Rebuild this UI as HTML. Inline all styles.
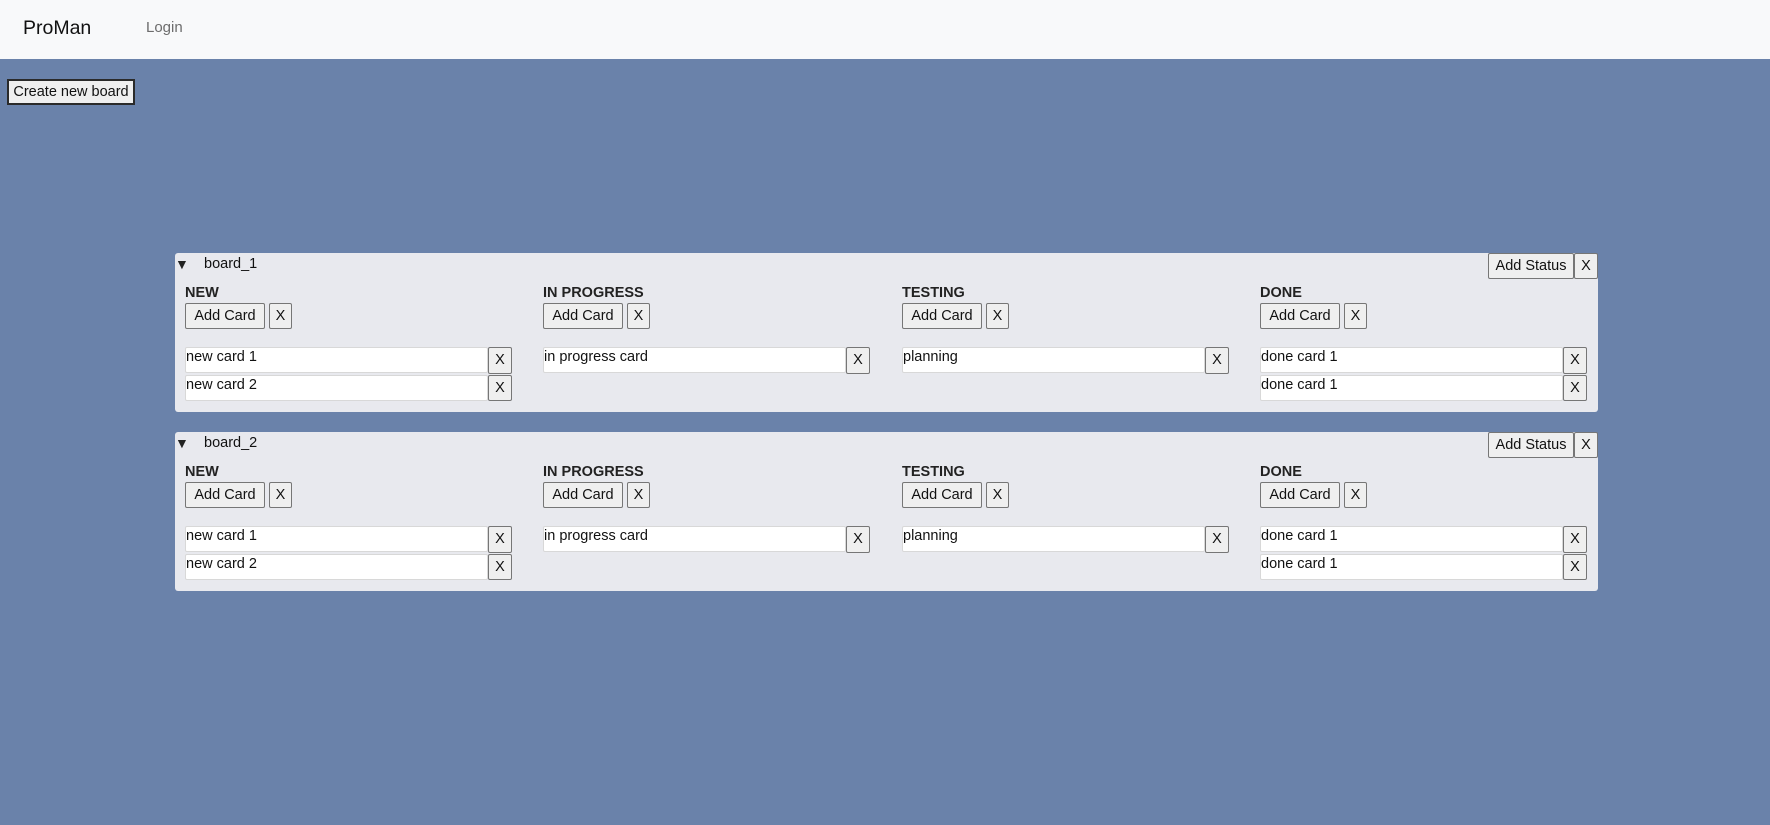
<!DOCTYPE html>
<html><head><meta charset="utf-8"><style>
*{box-sizing:border-box;margin:0;padding:0}
body{width:1770px;height:825px;background:#6a82aa;font-family:"Liberation Sans",Arial,sans-serif;position:relative;overflow:hidden;color:#222}
.nav{position:absolute;left:0;top:0;width:1770px;height:59px;background:#f8f9fa}
.brand{position:absolute;left:23px;top:17px;font-size:19.5px;color:#111}
.login{position:absolute;left:146px;top:19px;font-size:15px;color:#6c6c6c}
.btn{position:absolute;background:#efefef;border:1px solid #767676;border-radius:2px;font-size:14.5px;color:#111;text-align:center;line-height:24px;font-family:"Liberation Sans",Arial,sans-serif}
.create{left:7px;top:79px;width:128px;height:26px;border:2px solid #2a2a2a;border-radius:0;line-height:22px}
.board{position:absolute;left:175px;width:1423px;height:159px;background:#e8e9ee;border-radius:3px}
.tri{position:absolute;left:0;top:3px;font-size:14px}
.title{position:absolute;left:29px;top:3px;font-size:14.5px;color:#111}
.h{position:absolute;top:32px;font-size:14.5px;font-weight:bold;color:#222}
.card{position:absolute;width:303px;height:26px;background:#fff;border:1px solid #d8d8d8;border-radius:2px;font-size:14.5px;padding-left:0;line-height:19px;color:#111}
</style></head><body>
<div class="nav"><div class="brand">ProMan</div><div class="login">Login</div></div>
<div class="btn create">Create new board</div>

<div class="board" style="top:253px">
<div class="tri">▼</div><div class="title">board_1</div>
<div class="btn" style="left:1313px;top:0;width:86px;height:26px">Add Status</div>
<div class="btn" style="left:1399px;top:0;width:24px;height:26px">X</div>
<div class="h" style="left:10px">NEW</div>
<div class="btn" style="left:10px;top:50px;width:80px;height:26px">Add Card</div><div class="btn" style="left:94px;top:50px;width:23px;height:26px">X</div>
<div class="card" style="left:10px;top:94px">new card 1</div><div class="btn" style="left:313px;top:94px;width:24px;height:27px">X</div>
<div class="card" style="left:10px;top:122px">new card 2</div><div class="btn" style="left:313px;top:122px;width:24px;height:26px">X</div>
<div class="h" style="left:368px">IN PROGRESS</div>
<div class="btn" style="left:368px;top:50px;width:80px;height:26px">Add Card</div><div class="btn" style="left:452px;top:50px;width:23px;height:26px">X</div>
<div class="card" style="left:368px;top:94px">in progress card</div><div class="btn" style="left:671px;top:94px;width:24px;height:27px">X</div>
<div class="h" style="left:727px">TESTING</div>
<div class="btn" style="left:727px;top:50px;width:80px;height:26px">Add Card</div><div class="btn" style="left:811px;top:50px;width:23px;height:26px">X</div>
<div class="card" style="left:727px;top:94px">planning</div><div class="btn" style="left:1030px;top:94px;width:24px;height:27px">X</div>
<div class="h" style="left:1085px">DONE</div>
<div class="btn" style="left:1085px;top:50px;width:80px;height:26px">Add Card</div><div class="btn" style="left:1169px;top:50px;width:23px;height:26px">X</div>
<div class="card" style="left:1085px;top:94px">done card 1</div><div class="btn" style="left:1388px;top:94px;width:24px;height:27px">X</div>
<div class="card" style="left:1085px;top:122px">done card 1</div><div class="btn" style="left:1388px;top:122px;width:24px;height:26px">X</div>
</div>

<div class="board" style="top:432px">
<div class="tri">▼</div><div class="title">board_2</div>
<div class="btn" style="left:1313px;top:0;width:86px;height:26px">Add Status</div>
<div class="btn" style="left:1399px;top:0;width:24px;height:26px">X</div>
<div class="h" style="left:10px">NEW</div>
<div class="btn" style="left:10px;top:50px;width:80px;height:26px">Add Card</div><div class="btn" style="left:94px;top:50px;width:23px;height:26px">X</div>
<div class="card" style="left:10px;top:94px">new card 1</div><div class="btn" style="left:313px;top:94px;width:24px;height:27px">X</div>
<div class="card" style="left:10px;top:122px">new card 2</div><div class="btn" style="left:313px;top:122px;width:24px;height:26px">X</div>
<div class="h" style="left:368px">IN PROGRESS</div>
<div class="btn" style="left:368px;top:50px;width:80px;height:26px">Add Card</div><div class="btn" style="left:452px;top:50px;width:23px;height:26px">X</div>
<div class="card" style="left:368px;top:94px">in progress card</div><div class="btn" style="left:671px;top:94px;width:24px;height:27px">X</div>
<div class="h" style="left:727px">TESTING</div>
<div class="btn" style="left:727px;top:50px;width:80px;height:26px">Add Card</div><div class="btn" style="left:811px;top:50px;width:23px;height:26px">X</div>
<div class="card" style="left:727px;top:94px">planning</div><div class="btn" style="left:1030px;top:94px;width:24px;height:27px">X</div>
<div class="h" style="left:1085px">DONE</div>
<div class="btn" style="left:1085px;top:50px;width:80px;height:26px">Add Card</div><div class="btn" style="left:1169px;top:50px;width:23px;height:26px">X</div>
<div class="card" style="left:1085px;top:94px">done card 1</div><div class="btn" style="left:1388px;top:94px;width:24px;height:27px">X</div>
<div class="card" style="left:1085px;top:122px">done card 1</div><div class="btn" style="left:1388px;top:122px;width:24px;height:26px">X</div>
</div>
</body></html>
